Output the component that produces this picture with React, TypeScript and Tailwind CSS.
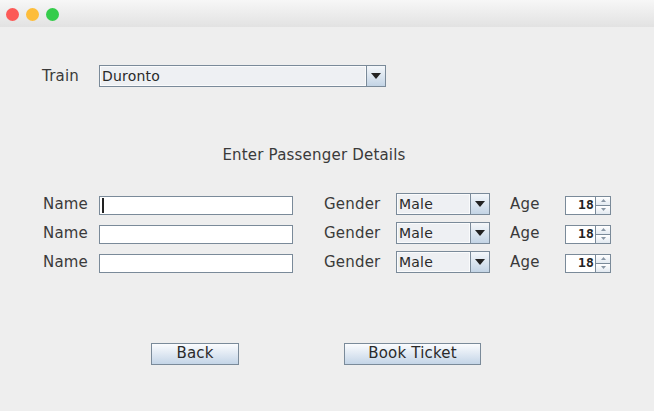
import React from "react";

const font = { fontFamily: '"DejaVu Sans", sans-serif' };

const Arrow = () => (
  <svg width="10" height="6" viewBox="0 0 10 6">
    <path d="M0 0 H10 L5 6 Z" fill="#222" />
  </svg>
);

const Combo = ({ value, w }: { value: string; w: string }) => (
  <div className={`${w} h-[22px] flex border border-[#7a8a99] bg-[#eef0f3]`}>
    <div className="flex-1 flex items-center pl-[1px] text-[14px] text-[#2a2a2a] leading-none border border-[#fafbfc]">
      {value}
    </div>
    <div className="w-[19px] flex items-center justify-center border-l border-[#7a8a99] bg-gradient-to-b from-[#f4f7fa] to-[#c3d4e5]">
      <Arrow />
    </div>
  </div>
);

const Spinner = () => (
  <div className="w-[46px] h-[19px] flex border border-[#7a8a99] bg-white">
    <div className="flex-1 flex items-center justify-end pr-[1px] text-[13px] font-bold text-[#222]" style={{ fontFamily: '"DejaVu Sans Mono", monospace' }}>
      18
    </div>
    <div className="w-[15px] flex flex-col border-l border-[#7a8a99]">
      <div className="flex-1 flex items-center justify-center bg-gradient-to-b from-white to-[#e3eaf1] border-b border-[#7a8a99]">
        <svg width="5" height="3" viewBox="0 0 5 3"><path d="M0 3 L2.5 0 L5 3 Z" fill="#8a98a6" /></svg>
      </div>
      <div className="flex-1 flex items-center justify-center bg-gradient-to-b from-white to-[#e3eaf1]">
        <svg width="5" height="3" viewBox="0 0 5 3"><path d="M0 0 L2.5 3 L5 0 Z" fill="#8a98a6" /></svg>
      </div>
    </div>
  </div>
);

const Row = ({ first }: { first?: boolean }) => (
  <div className="flex items-end h-[22px] pl-[43px] text-[15px] tracking-[0.2px] text-[#3a3a3a]">
    <div className="w-[56px] leading-[22px]">Name</div>
    <div className="w-[194px] h-[19px] border border-[#7a8a99] bg-white flex items-center pl-[2px]">
      {first && <div className="w-[2px] h-[15px] bg-[#222]" />}
    </div>
    <div className="ml-[31px] w-[72px] leading-[22px]">Gender</div>
    <Combo value="Male" w="w-[94px]" />
    <div className="ml-[20px] w-[55px] leading-[22px]">Age</div>
    <Spinner />
  </div>
);

const Btn = ({ label, w }: { label: string; w: string }) => (
  <div className={`${w} h-[22px] border border-[#7a8a99] bg-gradient-to-b from-[#fbfcfe] to-[#c4d5e7] flex items-center justify-center text-[15px] tracking-[0.2px] text-[#2a2a2a]`}>
    {label}
  </div>
);

export default function App() {
  return (
    <div className="w-[654px] h-[411px] bg-[#eeeeee] flex flex-col overflow-hidden" style={font}>
      <div className="h-[27px] bg-gradient-to-b from-[#f7f7f7] to-[#e2e2e2] flex items-center gap-[7px] pl-[6px] pt-[1px]">
        <div className="w-[13px] h-[13px] rounded-full bg-[#fc5a57]" />
        <div className="w-[13px] h-[13px] rounded-full bg-[#fdbd3a]" />
        <div className="w-[13px] h-[13px] rounded-full bg-[#35cc4b]" />
      </div>

      <div className="mt-[38px] flex items-center pl-[42px] text-[15px] tracking-[0.2px] text-[#3a3a3a]">
        <div className="w-[57px]">Train</div>
        <Combo value="Duronto" w="w-[287px]" />
      </div>

      <div className="mt-[58px] text-center text-[15px] tracking-[0.2px] leading-[18px] text-[#3a3a3a] pr-[26px]">
        Enter Passenger Details
      </div>

      <div className="mt-[29px] flex flex-col gap-[7px]">
        <Row first />
        <Row />
        <Row />
      </div>

      <div className="mt-[70px] flex pl-[151px] gap-[105px]">
        <Btn label="Back" w="w-[88px]" />
        <Btn label="Book Ticket" w="w-[137px]" />
      </div>
    </div>
  );
}
